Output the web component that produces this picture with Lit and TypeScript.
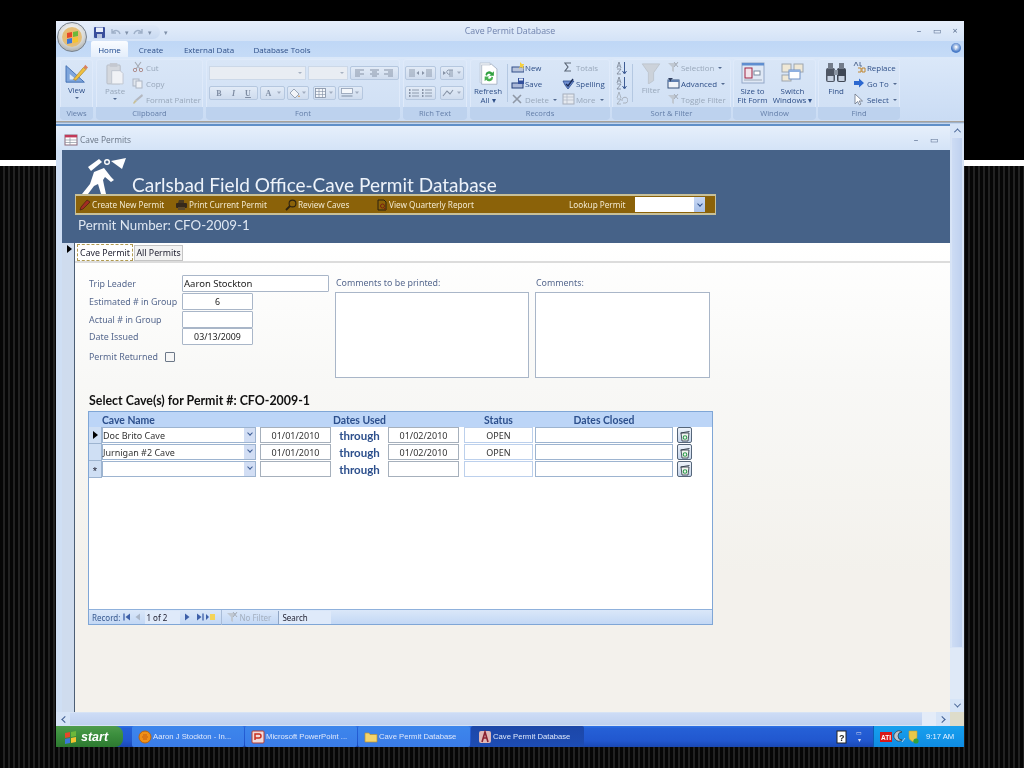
import { LitElement, html, css, svg } from "lit";
import { customElement } from "lit/decorators.js";

const I: Record<string, any> = {
  save: svg`<rect x="1" y="1" width="11" height="11" rx="1" fill="#3a4f9c"/><rect x="3" y="1.5" width="7" height="4.5" fill="#e8eefa"/><rect x="4" y="8" width="5" height="4" fill="#b9c6e0"/>`,
  undo: svg`<path d="M3 3 V7 H7 M3.5 6.5 C6 3.5 10 4 11 8" fill="none" stroke="#9fb0c8" stroke-width="1.4"/>`,
  redo: svg`<path d="M10 3 V7 H6 M9.5 6.5 C7 3.5 3 4 2 8" fill="none" stroke="#9fb0c8" stroke-width="1.4"/>`,
  view: svg`<path d="M1 4 L1 22 L21 22 Z" fill="#7fa6dc" stroke="#3f6cb0"/><path d="M5 13 L5 19 L12 19 Z" fill="#dce8f8"/><path d="M9 19 L20 6 L23 8 L12 20 Z" fill="#f0c040" stroke="#a88020" stroke-width=".7"/><path d="M20 6 L22 3 L25 6 L23 8Z" fill="#d88060"/>`,
  paste: svg`<rect x="1" y="3" width="14" height="20" rx="1" fill="#d4d8de" stroke="#b6bcc6"/><rect x="4" y="1" width="8" height="4" fill="#c4c8d0"/><path d="M6 9 H15 L18 12 V23 H6Z" fill="#f0f2f6" stroke="#c0c6d0"/>`,
  cut: svg`<path d="M3 1 L8 8 M9 1 L4 8" stroke="#a4aab4" stroke-width="1.1" fill="none"/><circle cx="3" cy="9" r="1.7" fill="none" stroke="#b09090"/><circle cx="9" cy="9" r="1.7" fill="none" stroke="#b09090"/>`,
  copy: svg`<rect x="1" y="2" width="6" height="7" fill="#e0e6ee" stroke="#adb6c4"/><rect x="4" y="4" width="6" height="7" fill="#eef1f6" stroke="#adb6c4"/>`,
  painter: svg`<path d="M10 1 L11 3 L5 8 L3 7Z" fill="#b4b8c0"/><path d="M3 7 L5 8 L2 11 L1 10Z" fill="#c8c098"/>`,
  refresh: svg`<path d="M3 3 H16 L23 9 V29 H3Z" fill="#fff" stroke="#9aa6b8"/><path d="M1 1 H14 V4 H3 V27 H1Z" fill="#e8ecf2" stroke="#aab4c4" stroke-width=".6"/><path d="M8 17 A5 5 0 0 1 17 14 L19 12 V18 H13 L15 16 A3 3 0 0 0 10 18Z" fill="#31a040"/><path d="M18 20 A5 5 0 0 1 9 23 L7 25 V19 H13 L11 21 A3 3 0 0 0 16 19Z" fill="#48b050"/>`,
  new: svg`<rect x="1" y="6" width="12" height="5" fill="#b8c4dc" stroke="#34508a"/><path d="M9 1 L11 3 L14 3 L12 5 L13 8 L10 6 L8 8 L9 5Z" fill="#f6d040"/>`,
  saverec: svg`<rect x="1" y="6" width="11" height="5" fill="#aab8d8" stroke="#24407a"/><rect x="7" y="1" width="6" height="6" fill="#33509c"/><rect x="8" y="1.5" width="4" height="2" fill="#e4ecf8"/>`,
  x: svg`<path d="M2 2 L10 10 M10 2 L2 10" stroke="#8f98a6" stroke-width="1.6"/>`,
  sigma: svg`<path d="M9 2 H3 L6 6 L3 10 H9" fill="none" stroke="#5c6878" stroke-width="1.2"/>`,
  spell: svg`<path d="M1 4 H12 L9 8 L6 12 L3 8Z" fill="#6e8ed0" stroke="#27488c" stroke-width=".8"/><path d="M4 7 L6 9 L11 2" fill="none" stroke="#1b2c58" stroke-width="1.4"/>`,
  more: svg`<rect x="1" y="1" width="11" height="10" fill="#e6eaf0" stroke="#a6aebc"/><path d="M1 4 H12 M1 7 H12 M5 1 V11" stroke="#b0b8c4" stroke-width=".7"/>`,
  az: svg`<path d="M3 7 L5 1 L7 7 M4 5 H6 M3 8 H7 L3 13 H7" fill="none" stroke="#7a8494" stroke-width=".8"/><path d="M10.5 1 V12 M8.5 10 L10.5 13 L12.5 10" fill="none" stroke="#3e5c94" stroke-width="1"/>`,
  clr: svg`<path d="M3 7 L5 1 L7 7 M3 8 H7 L3 13 H7" fill="none" stroke="#a0a8b4" stroke-width=".8"/><path d="M8 10 A3 3 0 1 1 12 12 L9 12" fill="none" stroke="#a8b0bc"/>`,
  funnel: svg`<path d="M1 1 H21 L14 11 V20 L8 24 V11Z" fill="#ccd2da" stroke="#bcc3cd"/>`,
  fsmall: svg`<path d="M1 2 H11 L7 6 V11 L5 10 V6Z" fill="#c0c8d2"/><path d="M7 1 L11 6 M11 1 L7 6" stroke="#a6aeba"/>`,
  adv: svg`<rect x="1" y="3" width="11" height="8" fill="#f0f4fa" stroke="#34507a"/><rect x="1" y="3" width="11" height="2" fill="#5f7fb0"/><path d="M1 1 H6 L4 3 V5Z" fill="#2f3f60"/>`,
  size: svg`<rect x="1" y="1" width="22" height="20" fill="#dfe8f5" stroke="#93a8c8"/><rect x="1" y="1" width="22" height="2.5" fill="#5f8ed0"/><rect x="4" y="6" width="7" height="10" fill="#f2e2ea" stroke="#a02040"/><rect x="13" y="9" width="6" height="4" fill="#fff" stroke="#7a8aa0"/><path d="M3 18 H21" stroke="#9ba8b8"/>`,
  sw: svg`<rect x="1" y="1" width="9" height="8" fill="#efe8d6" stroke="#9da5ae"/><rect x="13" y="1" width="9" height="8" fill="#efe8d6" stroke="#9da5ae"/><rect x="1" y="12" width="9" height="6" fill="#efe8d6" stroke="#9da5ae"/><rect x="8" y="7" width="11" height="9" fill="#fff" stroke="#6e90c4"/><rect x="8" y="7" width="11" height="2" fill="#8fb0e0"/>`,
  find: svg`<rect x="1" y="6" width="9" height="14" rx="2" fill="#4e5664"/><rect x="12" y="6" width="9" height="14" rx="2" fill="#3f4755"/><rect x="3" y="1" width="5" height="6" fill="#737c8a"/><rect x="14" y="1" width="5" height="6" fill="#737c8a"/><rect x="9" y="8" width="4" height="5" fill="#8a94a2"/><rect x="2.5" y="14" width="6" height="5" fill="#c7d2e2"/><rect x="13.5" y="14" width="6" height="5" fill="#c7d2e2"/>`,
  repl: svg`<path d="M1 5 L3 1 L5 5 M7 1 V5 H9" fill="none" stroke="#3c5680" stroke-width=".8"/><path d="M5 7 H8 V11 H5 M9 7 H12 V11 H9Z" fill="none" stroke="#c08020" stroke-width=".9"/>`,
  goto: svg`<path d="M1 4 H6 V1.5 L11 6 L6 10.5 V8 H1Z" fill="#2c68d0"/>`,
  sel: svg`<path d="M2 1 V11 L4.5 8.5 L6.5 12 L8 11 L6 8 H9.5Z" fill="#fff" stroke="#6a7486" stroke-width=".8"/>`,
  ds: svg`<rect x="1" y="1" width="12" height="10" fill="#fff" stroke="#8b6a7a"/><rect x="1" y="1" width="12" height="2.4" fill="#c23a5a"/><path d="M6 3.5 V11 M1 6 H13 M1 8.5 H13" stroke="#8b93a0" stroke-width=".7"/>`,
  pencil: svg`<path d="M8 1 L11 3 L4 10 L1 11 L2 8Z" fill="#a22c24" stroke="#3a1a10" stroke-width=".6"/>`,
  printer: svg`<path d="M3 4 L4 1 H9 L9 4Z" fill="#4a3a20" /><rect x="1" y="4" width="11" height="5" rx="1" fill="#36291a"/><rect x="3" y="8" width="7" height="3" fill="#5c4a2c"/>`,
  mag: svg`<circle cx="7.5" cy="4.5" r="3.4" fill="none" stroke="#2e2310" stroke-width="1.1"/><path d="M5 7 L1 11" stroke="#2e2310" stroke-width="1.8"/>`,
  report: svg`<path d="M2 1 H8 L10 3 V11 H2Z" fill="none" stroke="#2a2010"/><circle cx="6.5" cy="7" r="2" fill="none" stroke="#7a2010"/><path d="M8 9 L10 11" stroke="#7a2010"/>`,
  caver: svg`<g fill="#fff"><circle cx="25" cy="4" r="2.3" fill="none" stroke="#fff" stroke-width="1.4"/><path d="M29 3 L44 0 L40 11Z"/><path d="M6 9 L17 1 L20 4 L9 13Z"/><path d="M12 14 L22 10 L29 19 L32 22 L29 24 L23 19 L21 22 L22 27 L24 36 L19 36 L16 26 L12 28 L6 36 L0 36 L8 26Z"/></g>`,
  del: svg`<path d="M3 4 H11 L10 12 H4Z" fill="#f2f4f0" stroke="#3a4450" stroke-width=".9"/><path d="M2.5 4 L11.5 2.5" stroke="#3a4450"/><circle cx="7" cy="8.5" r="1.8" fill="none" stroke="#2d9a4c" stroke-width="1.1"/>`,
  first: svg`<path d="M2 1.5 V8.5" stroke="#3d5fa8" stroke-width="1.3"/><path d="M8 1.5 V8.5 L3.5 5Z" fill="#3d5fa8"/>`,
  prev: svg`<path d="M7 1.5 V8.5 L2.5 5Z" fill="#aab6c8"/>`,
  next: svg`<path d="M3 1.5 V8.5 L7.5 5Z" fill="#3d5fa8"/>`,
  last: svg`<path d="M8 1.5 V8.5" stroke="#3d5fa8" stroke-width="1.3"/><path d="M2 1.5 V8.5 L6.5 5Z" fill="#3d5fa8"/>`,
  nw: svg`<path d="M1 2 V8 L4 5Z" fill="#3d5fa8"/><path d="M5 2 H10 V8 H5Z" fill="#f4d458"/>`,
  flag: svg`<path d="M1 4 L6 3 V8 L1 9Z" fill="#e5482a"/><path d="M7 3 L12 2 V7 L7 8Z" fill="#6cb83a"/><path d="M1 10 L6 9 V14 L1 15Z" fill="#3c78d8"/><path d="M7 9 L12 8 V13 L7 14Z" fill="#f4c430"/>`,
  ie: svg`<circle cx="7" cy="7" r="6" fill="#f09018" stroke="#b86410"/><path d="M4 7 H10 M5 5 H9 M5 9 H9" stroke="#c85c10"/>`,
  ppt: svg`<rect x="1" y="1" width="12" height="12" rx="1" fill="#f0dada" stroke="#b83c30"/><path d="M4 10 V4 H8 A2 2 0 0 1 8 8 H4" fill="none" stroke="#c83020" stroke-width="1.5"/>`,
  folder: svg`<path d="M1 3 H5 L6 4.5 H13 V12 H1Z" fill="#f4d46c" stroke="#b89030" stroke-width=".7"/>`,
  access: svg`<rect x="1" y="1" width="12" height="12" rx="2" fill="#e0b8b8"/><path d="M4 12 L7 2 L10 12 M5 8 H9" fill="none" stroke="#8a2030" stroke-width="1.6"/>`,
  help: svg`<rect x="1" y="1" width="9" height="12" fill="#fff" stroke="#222"/><text x="3" y="10.5" font-size="9" font-family="Liberation Sans" font-weight="700" fill="#222">?</text>`,
  ati: svg`<rect x="0" y="1" width="12" height="10" fill="#d81818"/><text x="1" y="9" font-size="6.5" font-family="Liberation Sans" font-weight="700" fill="#fff">ATI</text>`,
  vol: svg`<path d="M9 2 A5 5 0 1 0 9 10 A3.5 3.5 0 0 1 9 2Z" fill="#b8c4d0" stroke="#333" stroke-width=".7"/><path d="M9 12 L12 8" stroke="#ccd"/>`,
  shield: svg`<path d="M2 1 H10 V7 C10 10 7 11 6 12 C5 11 2 10 2 7Z" fill="#e8c84a" stroke="#c0a030" stroke-width=".6"/><circle cx="9" cy="11" r="2.6" fill="#2ea040"/>`,
  al: svg`<path d="M1 2 H10 M1 4 H6 M1 6 H10 M1 8 H6" stroke="#8793a6" stroke-width="1"/>`,
  ac: svg`<path d="M1 2 H10 M3 4 H8 M1 6 H10 M3 8 H8" stroke="#8793a6" stroke-width="1"/>`,
  ar: svg`<path d="M1 2 H10 M5 4 H10 M1 6 H10 M5 8 H10" stroke="#8793a6" stroke-width="1"/>`,
  ind: svg`<path d="M5 2 H11 M5 4 H11 M5 6 H11 M5 8 H11" stroke="#8793a6" stroke-width=".9"/><path d="M1 3 L3.5 5 L1 7Z" fill="#8793a6"/>`,
  out: svg`<path d="M1 2 H7 M1 4 H7 M1 6 H7 M1 8 H7" stroke="#8793a6" stroke-width=".9"/><path d="M11 3 L8.5 5 L11 7Z" fill="#8793a6"/>`,
  li: svg`<path d="M4 2 H11 M4 5 H11 M4 8 H11" stroke="#8793a6" stroke-width=".9"/><path d="M1 1 H2.5 V3 H1Z M1 4 H2.5 V6 H1Z M1 7 H2.5 V9 H1Z" fill="#8793a6"/>`,
  para: svg`<path d="M1 3 L4 5 L1 7Z" fill="#8793a6"/><path d="M8 2 V9 M10 2 V9 M6 2 H11 M6 2 A2 2 0 0 0 8 6" fill="none" stroke="#8793a6" stroke-width=".9"/>`,
  mark: svg`<path d="M1 8 L5 3 L8 6 L11 2" fill="none" stroke="#8793a6" stroke-width="1.1"/>`,
  bucket: svg`<path d="M5 1 L10 6 L6 10 L1 5Z" fill="#f2f4f8" stroke="#8793a6" stroke-width=".8"/><path d="M10 7 L11 9 L9 9Z" fill="#d29a5a"/>`,
  grid: svg`<rect x=".5" y=".5" width="10" height="9" fill="#f4f7fb" stroke="#7f8da2" stroke-width=".8"/><path d="M4 .5 V9.5 M7.5 .5 V9.5 M.5 3.5 H10.5 M.5 6.5 H10.5" stroke="#7f8da2" stroke-width=".6"/>`,
  box: svg`<rect x=".5" y=".5" width="11" height="5" fill="#f4f7fb" stroke="#8f9db2" stroke-width=".8"/><path d="M.5 8 H11.5" stroke="#7f8da2" stroke-width="1.2"/>`,
  dd: svg`<path d="M1 3.5 L3 6 L5 3.5Z" fill="#a1adbf"/>`,
};

const ic = (n: string, w: number, h: number, vw = w, vh = h) =>
  html`<svg class="ic" width=${w} height=${h} viewBox="0 0 ${vw} ${vh}">${I[n]}</svg>`;
const caret = html`<span class="caret"></span>`;
const tg = (n: string) => (n === "dd" ? ic("dd", 6, 10) : ic(n, 12, 10));

const small = (n: string, t: string, off = false, drop = false) => html`
  <div class="small ${off ? "off" : ""}">${ic(n, 13, 13)}<span>${t}</span>${drop ? caret : ""}</div>`;
const tool = (cls: string, items: string[]) => html`<div class="tool ${cls}">${items.map((g) => tg(g))}</div>`;

const rows = [
  { sel: "cur", cave: "Doc Brito Cave", from: "01/01/2010", to: "01/02/2010", st: "OPEN" },
  { sel: "", cave: "Jurnigan #2 Cave", from: "01/01/2010", to: "01/02/2010", st: "OPEN" },
  { sel: "new", cave: "", from: "", to: "", st: "" },
];

@customElement("app-root")
export class AppRoot extends LitElement {
  static styles = css`
    :host { display: block; width: 1024px; height: 768px; overflow: hidden; font-family: "Open Sans", "Liberation Sans", sans-serif; }
    .page { position: relative; width: 1024px; height: 768px; background: #000; display: flex; flex-direction: column; filter: blur(0.4px); }
    .blk { height: 160px; background: #000; }
    .rule { height: 6px; background: #fff; }
    .stripes { flex: 1; background: repeating-linear-gradient(90deg, #060606 0 3px, #222 3px 5px); }
    .win { position: absolute; left: 56px; top: 21px; width: 908px; height: 726px; display: flex; flex-direction: column; background: #cfdff5; overflow: hidden; }
    .ic { display: block; flex: none; }

    .title { height: 20px; flex: none; background: linear-gradient(#e6eefa, #d4e3f7); display: flex; align-items: center; justify-content: center; position: relative; font-size: 8.8px; color: #6f82ad; }
    .qa { position: absolute; left: 37px; top: 4px; display: flex; align-items: center; gap: 4px; height: 14px; }
    .qb { display: flex; align-items: center; gap: 3px; height: 14px; padding-right: 8px; background: linear-gradient(#dfe9f8, #c8d9f1); border-radius: 0 8px 8px 0; }
    .qa b { font-size: 7px; color: #7f90a8; font-weight: 400; }
    .ctl { position: absolute; right: 5px; top: 4px; display: flex; gap: 10px; font-size: 9px; color: #5b6f90; line-height: 11px; }
    .ctl span { width: 8px; text-align: center; }
    .orb { position: absolute; left: 1px; top: 1px; width: 30px; height: 30px; border-radius: 50%; background: radial-gradient(circle at 50% 35%, #fff, #d7d9d8 55%, #8d8f8f 100%); border: 1px solid #77818c; display: grid; place-items: center; z-index: 2; box-sizing: border-box; }
    .orb div { width: 20px; height: 20px; border-radius: 50%; background: radial-gradient(circle, #f7b25a, #d9c68a); display: grid; place-items: center; }

    .tabs { height: 16px; flex: none; display: flex; padding-left: 35px; background: linear-gradient(#bfd7f6, #c5dbf7); font-size: 8px; color: #2e4f88; position: relative; }
    .tab { display: flex; align-items: center; justify-content: center; }
    .t0 { width: 37px; background: linear-gradient(#fafcff, #e4eefb); border-radius: 2px 2px 0 0; font-weight: 500; color: #15428b; }
    .t1 { width: 46px; } .t2 { width: 70px; } .t3 { width: 76px; }
    .help { position: absolute; right: 3px; top: 2px; width: 10px; height: 10px; border-radius: 50%; background: radial-gradient(circle at 50% 40%, #fff, #4a7cc8 60%); font-size: 6px; color: #fff; text-align: center; line-height: 10px; }

    .ribbon { height: 63px; flex: none; display: flex; padding: 2px 0 0 4px; box-sizing: border-box; gap: 3px; background: linear-gradient(#dbe8f9, #cadcf4); border-radius: 2px; font-size: 7.9px; color: #2e4f88; }
    .grp { display: flex; flex-direction: column; border-radius: 3px; background: linear-gradient(#d9e6f7, #cfdff4); box-shadow: inset 0 0 0 1px #dfeafa; overflow: hidden; }
    .gb { flex: 1; display: flex; min-height: 0; }
    .gl { height: 13px; flex: none; background: #bdd2ee; text-align: center; line-height: 13px; font-size: 7.6px; color: #637ea8; }
    .g-views { width: 33px; } .g-clip { width: 107px; } .g-font { width: 194px; } .g-rich { width: 64px; }
    .g-rec { width: 140px; } .g-sort { width: 119px; margin-left: -1px; } .g-win { width: 83px; margin-left: -1px; } .g-find { width: 82px; margin-left: -1px; }

    .big { display: flex; flex-direction: column; align-items: center; padding-top: 3px; line-height: 9px; text-align: center; white-space: nowrap; }
    .big.off, .small.off { color: #98a7ba; }
    .big .sp { height: 2px; }
    .big .caret { margin: 2px auto 0; display: block; }
    .caret { width: 0; height: 0; border: 2px solid transparent; border-top: 2.5px solid #536a90; border-bottom: 0; margin-left: 3px; display: inline-block; flex: none; }
    .b-view { width: 33px; }
    .b-paste { width: 26px; margin-left: 6px; }
    .stack { display: flex; flex-direction: column; justify-content: space-between; padding: 2px 0 1px; }
    .small { display: flex; align-items: center; gap: 1px; height: 13px; white-space: nowrap; }
    .s-clip { margin-left: 4px; }
    .vsep { width: 1px; background: #b4c8e2; margin: 5px 3px; flex: none; }
    .b-ref { width: 32px; margin-left: 2px; }
    .s-rec1 { width: 46px; } .s-rec2 { margin-left: 5px; }
    .s-az { width: 15px; margin-left: 2px; padding: 2px 0; }
    .b-filter { width: 30px; padding-top: 4px; }
    .s-f { margin-left: 1px; }
    .b-size { width: 37px; margin-left: 1px; } .b-switch { width: 43px; padding-top: 4px; }
    .b-find { width: 30px; margin-left: 3px; } .s-find { margin-left: 2px; }
    .b-size .sp, .b-find .sp { height: 3px; }
    .b-switch svg { margin-bottom: 5px; }

    .fontb { flex: 1; padding: 7px 3px 0; display: flex; flex-direction: column; gap: 6px; }
    .frow { display: flex; gap: 2px; height: 14px; }
    .combo { background: #e9edf3; border: 1px solid #ccd8e8; box-sizing: border-box; position: relative; }
    .c-a { width: 97px; } .c-b { width: 40px; }
    .combo::after { content: ""; position: absolute; right: 3px; top: 5px; border: 2px solid transparent; border-top: 2.5px solid #a7b2c2; }
    .tool { display: flex; border: 1px solid #b5c7df; border-radius: 2px; background: linear-gradient(#e2ebf7, #cfdcee); height: 14px; box-sizing: border-box; align-items: center; justify-content: space-evenly; color: #7e8ca2; font-size: 8px; font-weight: 700; }
    .bt { font-family: "Liberation Serif", serif; min-width: 11px; text-align: center; }
    .bti { font-style: italic; }
    .btu { text-decoration: underline; }
    .w1 { width: 49px; } .w2 { width: 25px; } .w3 { width: 22px; } .w4 { width: 23px; margin-left: 2px; } .w5 { width: 25px; }
    .richb { flex: 1; padding: 7px 2px 0; display: flex; flex-direction: column; gap: 6px; }
    .richb .frow { gap: 4px; }
    .w7 { width: 31px; } .w8 { width: 24px; }

    .sepa { height: 4px; flex: none; background: linear-gradient(#cfdff4 0 1px, #a8a29a 1px 2px, #9eb0c6 2px 3px, #c3d6ef 3px); }
    .main { flex: 1; display: flex; min-height: 0; }
    .doc { flex: 1; display: flex; flex-direction: column; min-width: 0; border-top: 2px solid #5f8fc8; }
    .dt { height: 24px; flex: none; background: linear-gradient(#e6effb, #d4e3f7); display: flex; align-items: center; padding: 3px 0 0 8px; box-sizing: border-box; font-size: 8.4px; color: #6a7686; gap: 2px; position: relative; }
    .dctl { position: absolute; right: 12px; top: 7px; display: flex; gap: 10px; font-size: 9px; color: #5b6f90; }
    .dctl span { width: 8px; text-align: center; }
    .hdr { margin-left: 6px; height: 93px; flex: none; background: #466288; display: flex; flex-direction: column; color: #eef3fa; box-sizing: border-box; }
    .brand { height: 44px; flex: none; display: flex; padding: 8px 0 0 20px; box-sizing: border-box; align-items: flex-start; font-family: "Lato", sans-serif; }
    .brand h1 { margin: 14px 0 0 6px; font-size: 19px; font-weight: 400; line-height: 26px; white-space: nowrap; }
    .bar { margin-left: 13px; width: 641px; height: 21px; box-sizing: border-box; flex: none; background: #8b6209; border: solid #c7c09a; border-width: 2px 1px; display: flex; align-items: center; font-family: "Noto Sans", sans-serif; font-size: 8.2px; color: #f3ead0; padding-left: 3px; position: relative; }
    .bi { display: flex; align-items: center; gap: 1px; white-space: nowrap; }
    .bi1 { width: 96px; } .bi2 { width: 110px; } .bi3 { width: 91px; } .bi4 { width: 193px; }
    .bi5 { width: 66px; }
    .lk { width: 70px; height: 15px; background: #fff; position: relative; }
    .lk::after { content: ""; position: absolute; right: 0; top: 0; width: 11px; height: 15px; background: linear-gradient(#c8d8f4, #a8c0e8); }
    .lk::before { content: ""; position: absolute; z-index: 1; right: 3px; top: 5px; width: 3px; height: 3px; border: solid #2e4f88; border-width: 0 1.4px 1.4px 0; transform: rotate(45deg); }
    .pn { margin: 0 0 0 16px; padding-top: 1px; font-family: "Lato", sans-serif; font-size: 13.3px; line-height: 18px; color: #dfe7f2; }

    .low { flex: 1; display: flex; min-height: 0; }
    .strip { width: 19px; flex: none; box-sizing: border-box; background: linear-gradient(90deg, #cfdff4 0 6px, #cfdcee 6px); border-right: 1px solid #4c5e74; padding: 2px 0 0 11px; }
    .arrow { width: 0; height: 0; border: 4px solid transparent; border-left: 5px solid #000; border-right: 0; }
    .form { flex: 1; display: flex; flex-direction: column; background: linear-gradient(#fff, #f8f8f6 30%, #f3f1ec 70%); font-family: "Noto Sans", sans-serif; min-width: 0; }
    .ftabs { height: 18px; flex: none; display: flex; align-items: flex-end; gap: 1px; padding-left: 2px; border-bottom: 2px solid #dcdcdc; font-size: 8.8px; color: #223; }
    .ft { box-sizing: border-box; display: flex; align-items: center; justify-content: center; background: #fff; }
    .ft.on { width: 56px; height: 17px; border: 1px dashed #b09a50; }
    .ft.no { width: 49px; height: 16px; border: 1px solid #c4c4c4; background: #f3f3f3; }

    .top { display: flex; padding: 12px 0 0 14px; height: 118px; flex: none; box-sizing: border-box; font-size: 8.9px; color: #56688e; }
    .fields { width: 246px; display: grid; grid-template-columns: 93px 71px 76px; grid-auto-rows: 17.7px; align-items: center; align-content: start; }
    .inp { box-sizing: border-box; height: 17px; background: #fff; border: 1px solid #a9b6c8; color: #222; font-size: 8.8px; display: flex; align-items: center; justify-content: center; border-radius: 1px; }
    .wide { grid-column: 2 / 4; justify-content: flex-start; padding-left: 1px; font-size: 9.5px; }
    .ret { margin-top: 4px; display: flex; align-items: center; gap: 7px; grid-column: 1 / 4; }
    .chk { width: 8px; height: 8px; border: 1px solid #6c7888; background: #f6f6f6; border-radius: 1px; }
    .cm { display: flex; flex-direction: column; gap: 3px; }
    .cm1 { width: 194px; margin-right: 6px; } .cm2 { width: 175px; }
    .cm label { padding-left: 1px; line-height: 12px; margin-top: 2px; }
    .area { height: 86px; background: #fff; border: 1px solid #a9b6c8; box-sizing: border-box; }

    .sect { margin: 12px 0 0 14px; font-size: 12.4px; line-height: 16px; font-weight: 700; color: #111; font-family: "Lato", sans-serif; }
    .sub { margin: 2px 0 0 13px; width: 625px; height: 214px; box-sizing: border-box; border: 1px solid #7fa6d6; background: #fff; display: flex; flex-direction: column; font-size: 9px; }
    .sh { height: 15px; flex: none; display: flex; align-items: center; background: #bcd5f7; color: #2c4f8c; font-weight: 700; font-size: 10.4px; font-family: "Lato", sans-serif; white-space: nowrap; }
    .hn { width: 154px; margin-left: 13px; }
    .hdu { width: 199px; margin-left: 4px; text-align: center; }
    .hst { width: 69px; margin-left: 5px; text-align: center; }
    .hc { width: 138px; margin-left: 2px; text-align: center; }
    .list { flex: 1; display: flex; flex-direction: column; }
    .row { height: 17px; display: flex; color: #333; flex: none; }
    .sel { width: 13px; flex: none; box-sizing: border-box; background: #cfdff4; border: solid #9db4d0; border-width: 0 1px 1px 0; display: grid; place-items: center; }
    .sel.new { font-size: 11px; line-height: 10px; color: #223; font-family: "Liberation Sans", sans-serif; padding-top: 3px; }
    .cell { box-sizing: border-box; height: 16px; border: 1px solid #9db4d0; background: #fff; display: flex; align-items: center; justify-content: center; white-space: nowrap; }
    .c-cave { width: 154px; justify-content: flex-start; position: relative; }
    .c-cave::after { content: ""; position: absolute; right: 0; top: 0; width: 11px; height: 14px; background: #d2def4; }
    .c-cave::before { content: ""; position: absolute; z-index: 1; right: 3px; top: 3px; width: 3px; height: 3px; border: solid #3c5c94; border-width: 0 1.3px 1.3px 0; transform: rotate(45deg); }
    .c-d1 { width: 71px; margin-left: 4px; border-color: #a6b0bc; }
    .thr { width: 57px; display: flex; align-items: center; justify-content: center; color: #2c4f8c; font-weight: 700; font-size: 11.5px; font-family: "Lato", sans-serif; height: 16px; }
    .c-d2 { width: 71px; border-color: #a6b0bc; }
    .c-st { width: 69px; margin-left: 5px; border-color: #bcd0ec; }
    .c-cl { width: 138px; margin-left: 2px; }
    .btn { width: 15px; height: 16px; margin-left: 4px; border: 1px solid #56667a; border-radius: 2px; box-sizing: border-box; background: linear-gradient(#eef3fa, #c4d4ea); display: grid; place-items: center; }
    .nav { height: 15px; flex: none; display: flex; align-items: center; background: linear-gradient(#dae7f9, #c3d8f5); border-top: 1px solid #8fb1dc; box-sizing: border-box; color: #38598f; font-size: 8px; padding-left: 3px; white-space: nowrap; }
    .n1 { margin-left: 2px; } .n2 { margin-left: 1px; } .n3 { margin-left: 2px; } .n4 { margin-left: 3px; }
    .navcur { width: 35px; height: 13px; background: #dfeafa; color: #223; display: flex; align-items: center; padding-left: 1px; box-sizing: border-box; margin-left: 2px; }
    .nf { margin-left: 6px; padding-left: 4px; border-left: 1px solid #a8bcd8; display: flex; align-items: center; gap: 1px; color: #a4afbf; height: 15px; width: 57px; box-sizing: border-box; }
    .srch { width: 53px; height: 13px; border-left: 1px solid #8fa5c4; background: #dfeafa; color: #223; display: flex; align-items: center; padding-left: 3px; box-sizing: border-box; }

    .vs { width: 14px; flex: none; display: flex; flex-direction: column; background: #d6e3f5; }
    .sb { height: 13px; flex: none; display: grid; place-items: center; background: #d6e4f7; }
    .ch { width: 4px; height: 4px; border: solid #3f5d90; border-width: 1.5px 0 0 1.5px; transform: rotate(45deg) translate(1px, 1px); }
    .ch.dn { transform: rotate(225deg) translate(1px, 1px); }
    .ch.lf { transform: rotate(-45deg) translate(1px, 1px); }
    .ch.rt { transform: rotate(135deg) translate(1px, 1px); }
    .vt { flex: none; height: 509px; background: linear-gradient(90deg, #cddcf4, #bfd1ef); margin: 0 1px; border: 1px solid #d8e4f6; }
    .vr { flex: 1; background: #dfe9f7; }
    .hs0 { height: 14px; flex: none; display: flex; align-items: center; background: #d6e3f5; }
    .hs0 .sb { width: 14px; height: 14px; }
    .ht { width: 852px; height: 12px; background: linear-gradient(#cddcf6, #bfd1ef); }
    .hr { height: 14px; background: #e4ecf8; flex: 1; }
    .corner { width: 14px; height: 14px; background: #dedcca; }

    .task { height: 21px; flex: none; display: flex; background: linear-gradient(#2e72e6, #2560d6 12%, #2157cf 70%, #1a48b4); font-family: "Liberation Sans", sans-serif; font-size: 7.7px; color: #dfe8fb; position: relative; }
    .start { width: 67px; flex: none; background: linear-gradient(#4e9c4c, #3c8f3e 40%, #2d7a30); border-radius: 0 8px 8px 0; display: flex; align-items: center; gap: 4px; padding-left: 8px; box-sizing: border-box; color: #fff; font-style: italic; font-weight: 700; font-size: 12.5px; }
    .tbs { display: flex; margin-left: 9px; gap: 1px; }
    .tb { width: 112px; flex: none; box-sizing: border-box; background: linear-gradient(#3d86ec, #3a7ce8); border-radius: 2px; display: flex; align-items: center; gap: 1px; padding-left: 6px; white-space: nowrap; }
    .tb.act { width: 113px; padding-left: 7px; background: linear-gradient(#1c47a8, #1d4cb4); }
    .mid { flex: 1; display: flex; align-items: center; gap: 9px; justify-content: flex-end; padding-right: 11px; }
    .tiny { display: flex; flex-direction: column; align-items: center; font-size: 6px; line-height: 7px; color: #dde; }
    .tray { width: 91px; flex: none; box-sizing: border-box; background: linear-gradient(#17a0ee, #0f8ce4); border-left: 1px solid #0d5cb4; display: flex; align-items: center; padding-left: 6px; gap: 1px; color: #e8f2ff; }
    .clock { margin-left: 6px; white-space: nowrap; }
  `;

  render() {
    return html`<div class="page">
      <div class="blk"></div><div class="rule"></div><div class="stripes"></div>
      <div class="win">
        <div class="title">
          <div class="qa"><div class="qb">${ic("save", 13, 13)}${ic("undo", 13, 13)}<b>▾</b>${ic("redo", 13, 13)}<b>▾</b></div><b>▾</b></div>
          Cave Permit Database
          <div class="ctl"><span>–</span><span>▭</span><span>×</span></div>
        </div>
        <div class="orb"><div>${ic("flag", 13, 16)}</div></div>
        <div class="tabs">
          <div class="tab t0">Home</div><div class="tab t1">Create</div><div class="tab t2">External Data</div><div class="tab t3">Database Tools</div>
          <div class="help">?</div>
        </div>
        <div class="ribbon">
          <div class="grp g-views"><div class="gb"><div class="big b-view">${ic("view", 24, 22, 26, 24)}<div class="sp"></div>View${caret}</div></div><div class="gl">Views</div></div>
          <div class="grp g-clip"><div class="gb">
            <div class="big b-paste off">${ic("paste", 18, 23, 19, 24)}<div class="sp"></div>Paste${caret}</div>
            <div class="stack s-clip">${small("cut", "Cut", true)}${small("copy", "Copy", true)}${small("painter", "Format Painter", true)}</div>
          </div><div class="gl">Clipboard</div></div>
          <div class="grp g-font"><div class="gb"><div class="fontb">
            <div class="frow"><div class="combo c-a"></div><div class="combo c-b"></div>${tool("w1", ["al", "ac", "ar"])}</div>
            <div class="frow">
              <div class="tool w1"><span class="bt">B</span><span class="bt bti">I</span><span class="bt btu">U</span></div>
              <div class="tool w2"><span class="bt">A</span>${tg("dd")}</div>
              ${tool("w3", ["bucket", "dd"])}${tool("w4", ["grid", "dd"])}${tool("w5", ["box", "dd"])}
            </div>
          </div></div><div class="gl">Font</div></div>
          <div class="grp g-rich"><div class="gb"><div class="richb">
            <div class="frow">${tool("w7", ["out", "ind"])}${tool("w8", ["para", "dd"])}</div>
            <div class="frow">${tool("w7", ["li", "li"])}${tool("w8", ["mark", "dd"])}</div>
          </div></div><div class="gl">Rich Text</div></div>
          <div class="grp g-rec"><div class="gb">
            <div class="big b-ref">${ic("refresh", 19, 23, 24, 30)}<div class="sp"></div>Refresh<span>All ▾</span></div>
            <div class="vsep"></div>
            <div class="stack s-rec1">${small("new", "New")}${small("saverec", "Save")}${small("x", "Delete", true, true)}</div>
            <div class="stack s-rec2">${small("sigma", "Totals", true)}${small("spell", "Spelling")}${small("more", "More", true, true)}</div>
          </div><div class="gl">Records</div></div>
          <div class="grp g-sort"><div class="gb">
            <div class="stack s-az">${ic("az", 14, 14)}${ic("az", 14, 14)}${ic("clr", 14, 14)}</div>
            <div class="vsep"></div>
            <div class="big b-filter off">${ic("funnel", 20, 21, 22, 24)}<div class="sp"></div>Filter</div>
            <div class="stack s-f">${small("fsmall", "Selection", true, true)}${small("adv", "Advanced", false, true)}${small("fsmall", "Toggle Filter", true)}</div>
          </div><div class="gl">Sort &amp; Filter</div></div>
          <div class="grp g-win"><div class="gb">
            <div class="big b-size">${ic("size", 24, 22)}<div class="sp"></div>Size to<span>Fit Form</span></div>
            <div class="big b-switch">${ic("sw", 23, 19)}Switch<span>Windows ▾</span></div>
          </div><div class="gl">Window</div></div>
          <div class="grp g-find"><div class="gb">
            <div class="big b-find">${ic("find", 22, 22)}<div class="sp"></div>Find</div>
            <div class="stack s-find">${small("repl", "Replace")}${small("goto", "Go To", false, true)}${small("sel", "Select", false, true)}</div>
          </div><div class="gl">Find</div></div>
        </div>
        <div class="sepa"></div>
        <div class="main">
          <div class="doc">
            <div class="dt">${ic("ds", 14, 12)}Cave Permits<div class="dctl"><span>–</span><span>▭</span></div></div>
            <div class="hdr">
              <div class="brand">${ic("caver", 44, 37)}<h1>Carlsbad Field Office-Cave Permit Database</h1></div>
              <div class="bar">
                <div class="bi bi1">${ic("pencil", 12, 12)}Create New Permit</div>
                <div class="bi bi2">${ic("printer", 13, 12)}Print Current Permit</div>
                <div class="bi bi3">${ic("mag", 12, 12)}Review Caves</div>
                <div class="bi bi4">${ic("report", 12, 12)}View Quarterly Report</div>
                <div class="bi bi5">Lookup Permit</div>
                <div class="lk"></div>
              </div>
              <div class="pn">Permit Number: CFO-2009-1</div>
            </div>
            <div class="low">
              <div class="strip"><div class="arrow"></div></div>
              <div class="form">
                <div class="ftabs"><div class="ft on">Cave Permit</div><div class="ft no">All Permits</div></div>
                <div class="top">
                  <div class="fields">
                    <div>Trip Leader</div><div class="inp wide">Aaron Stockton</div>
                    <div>Estimated # in Group</div><div class="inp">6</div><div></div>
                    <div>Actual # in Group</div><div class="inp"></div><div></div>
                    <div>Date Issued</div><div class="inp">03/13/2009</div><div></div>
                    <div class="ret">Permit Returned <span class="chk"></span></div>
                  </div>
                  <div class="cm cm1"><label>Comments to be printed:</label><div class="area"></div></div>
                  <div class="cm cm2"><label>Comments:</label><div class="area"></div></div>
                </div>
                <div class="sect">Select Cave(s) for Permit #: CFO-2009-1</div>
                <div class="sub">
                  <div class="sh"><span class="hn">Cave Name</span><span class="hdu">Dates Used</span><span class="hst">Status</span><span class="hc">Dates Closed</span></div>
                  <div class="list">
                    ${rows.map((r) => html`<div class="row">
                      <div class="sel ${r.sel}">${r.sel === "cur" ? html`<div class="arrow"></div>` : r.sel === "new" ? "*" : ""}</div>
                      <div class="cell c-cave">${r.cave}</div>
                      <div class="cell c-d1">${r.from}</div>
                      <div class="thr">through</div>
                      <div class="cell c-d2">${r.to}</div>
                      <div class="cell c-st">${r.st}</div>
                      <div class="cell c-cl"></div>
                      <div class="btn">${ic("del", 13, 13)}</div>
                    </div>`)}
                  </div>
                  <div class="nav">
                    Record:
                    <span class="n1">${ic("first", 10, 10)}</span><span class="n2">${ic("prev", 10, 10)}</span>
                    <div class="navcur">1 of 2</div>
                    <span class="n3">${ic("next", 10, 10)}</span><span class="n4">${ic("last", 10, 10)}</span><span>${ic("nw", 10, 10)}</span>
                    <div class="nf">${ic("fsmall", 12, 12)}No Filter</div>
                    <div class="srch">Search</div>
                  </div>
                </div>
              </div>
            </div>
          </div>
          <div class="vs">
            <div class="sb"><span class="ch"></span></div>
            <div class="vt"></div>
            <div class="vr"></div>
            <div class="sb"><span class="ch dn"></span></div>
          </div>
        </div>
        <div class="hs0">
          <div class="sb"><span class="ch lf"></span></div>
          <div class="ht"></div>
          <div class="hr"></div>
          <div class="sb"><span class="ch rt"></span></div>
          <div class="corner"></div>
        </div>
        <div class="task">
          <div class="start">${ic("flag", 13, 16)}start</div>
          <div class="tbs">
            <div class="tb">${ic("ie", 14, 14)}Aaron J Stockton - In...</div>
            <div class="tb">${ic("ppt", 14, 14)}Microsoft PowerPoint ...</div>
            <div class="tb">${ic("folder", 14, 14)}Cave Permit Database</div>
            <div class="tb act">${ic("access", 14, 14)}Cave Permit Database</div>
          </div>
          <div class="mid">${ic("help", 11, 14)}<div class="tiny"><span>▭</span><span>▾</span></div></div>
          <div class="tray">${ic("ati", 12, 12)}${ic("vol", 13, 13)}${ic("shield", 12, 14)}<span class="clock">9:17 AM</span></div>
        </div>
      </div>
    </div>`;
  }
}
